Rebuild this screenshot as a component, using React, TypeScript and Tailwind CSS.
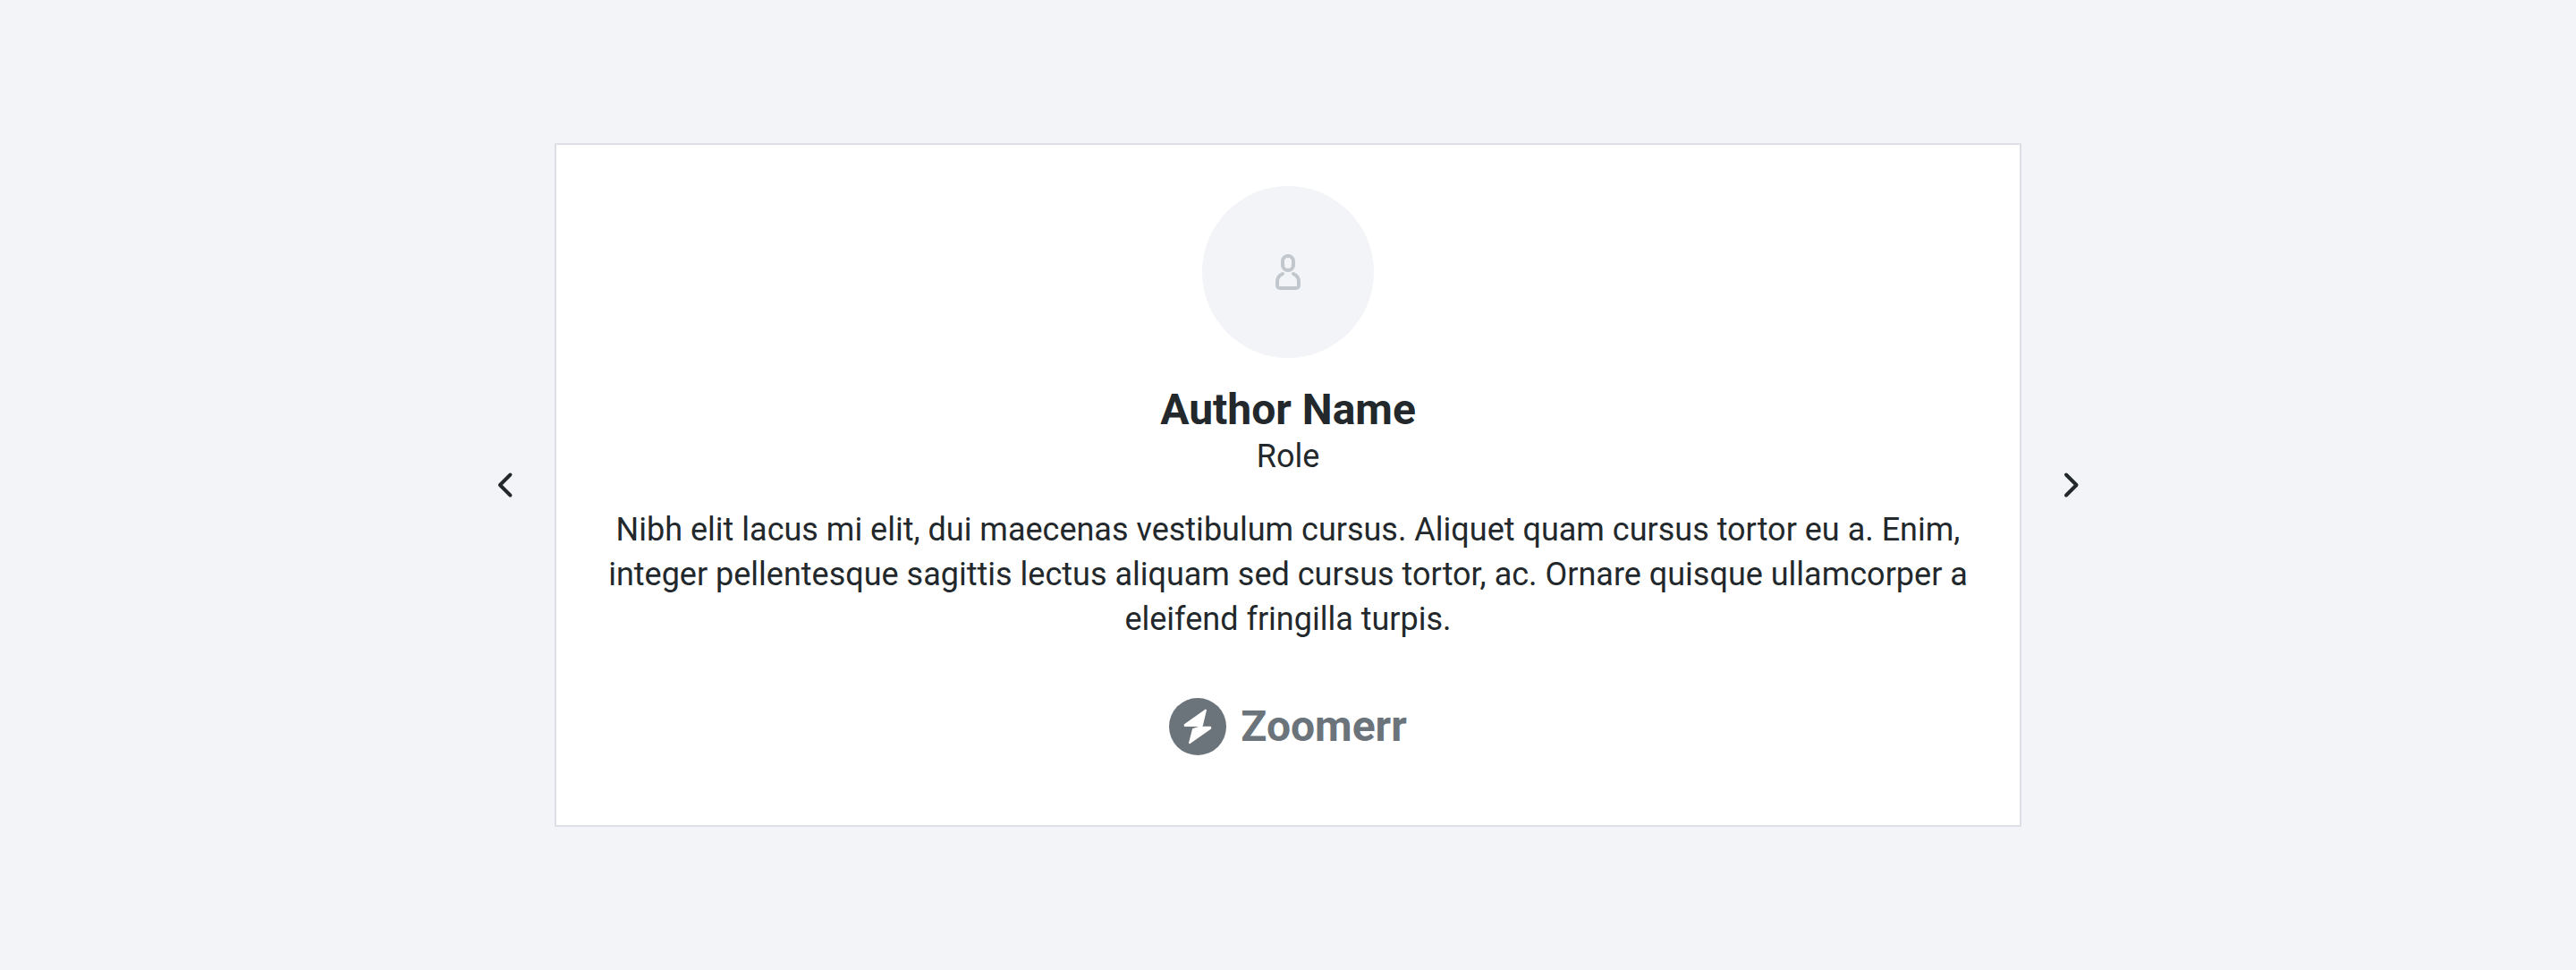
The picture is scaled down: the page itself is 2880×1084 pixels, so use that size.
function Chevron({ d, label }: { d: string; label: string }) {
  return (
    <button type="button" aria-label={label} className="flex size-16 items-center justify-center text-[#22282b]">
      <svg viewBox="0 0 48 48" className="size-12" fill="none" stroke="currentColor" strokeWidth="4" strokeLinecap="round" strokeLinejoin="round">
        <path d={d} />
      </svg>
    </button>
  );
}

function Avatar() {
  return (
    <div className="flex size-48 items-center justify-center rounded-full bg-[#f3f4f8]">
      <svg viewBox="0 0 48 48" className="size-12 text-[#c1c7cc]" fill="none" stroke="currentColor" strokeWidth="4" strokeLinecap="round" strokeLinejoin="round">
        <rect x="18" y="6" width="12" height="16" rx="6" />
        <path d="M18 26C14.4 27.6 12 31 12 35V39A3 3 0 0 0 15 42H33A3 3 0 0 0 36 39V35C36 31 33.6 27.6 30 26" />
      </svg>
    </div>
  );
}

function Logo() {
  return (
    <div className="flex items-center gap-4 text-[#6b737b]">
      <svg viewBox="0 0 64 64" className="size-16">
        <circle cx="32" cy="32" r="32" fill="currentColor" />
        <g fill="#fff" stroke="#fff" strokeWidth="2" strokeLinejoin="round">
          <path d="M41 13.6L17.7 30.1V31.1H36.8Z" />
          <path d="M23 50.2L46.2 34V32.8H34L27 34.9Z" />
        </g>
      </svg>
      <span className="text-5xl leading-16 font-bold">Zoomerr</span>
    </div>
  );
}

export default function App() {
  return (
    <main className="flex h-[1084px] w-full items-center justify-center gap-6 bg-[#f3f4f8] font-[Roboto,sans-serif] text-[#22282b]">
      <Chevron label="Previous" d="M30.5 12.5L19 24L30.5 35.5" />
      <article className="flex h-[764px] w-[1640px] flex-col items-center border-2 border-[#dddfe4] bg-white px-[46px] pt-[46px] text-center">
        <Avatar />
        <h2 className="mt-7 text-5xl leading-[60px] font-bold">Author Name</h2>
        <p className="text-4xl leading-[44px]">Role</p>
        <p className="mt-[35px] text-4xl leading-[50px]">
          Nibh elit lacus mi elit, dui maecenas vestibulum cursus. Aliquet quam cursus tortor eu a. Enim, integer pellentesque sagittis lectus aliquam sed cursus tortor, ac. Ornare quisque ullamcorper a eleifend fringilla turpis.
        </p>
        <div className="mt-[63px]">
          <Logo />
        </div>
      </article>
      <Chevron label="Next" d="M18 12.5L29.5 24L18 35.5" />
    </main>
  );
}
